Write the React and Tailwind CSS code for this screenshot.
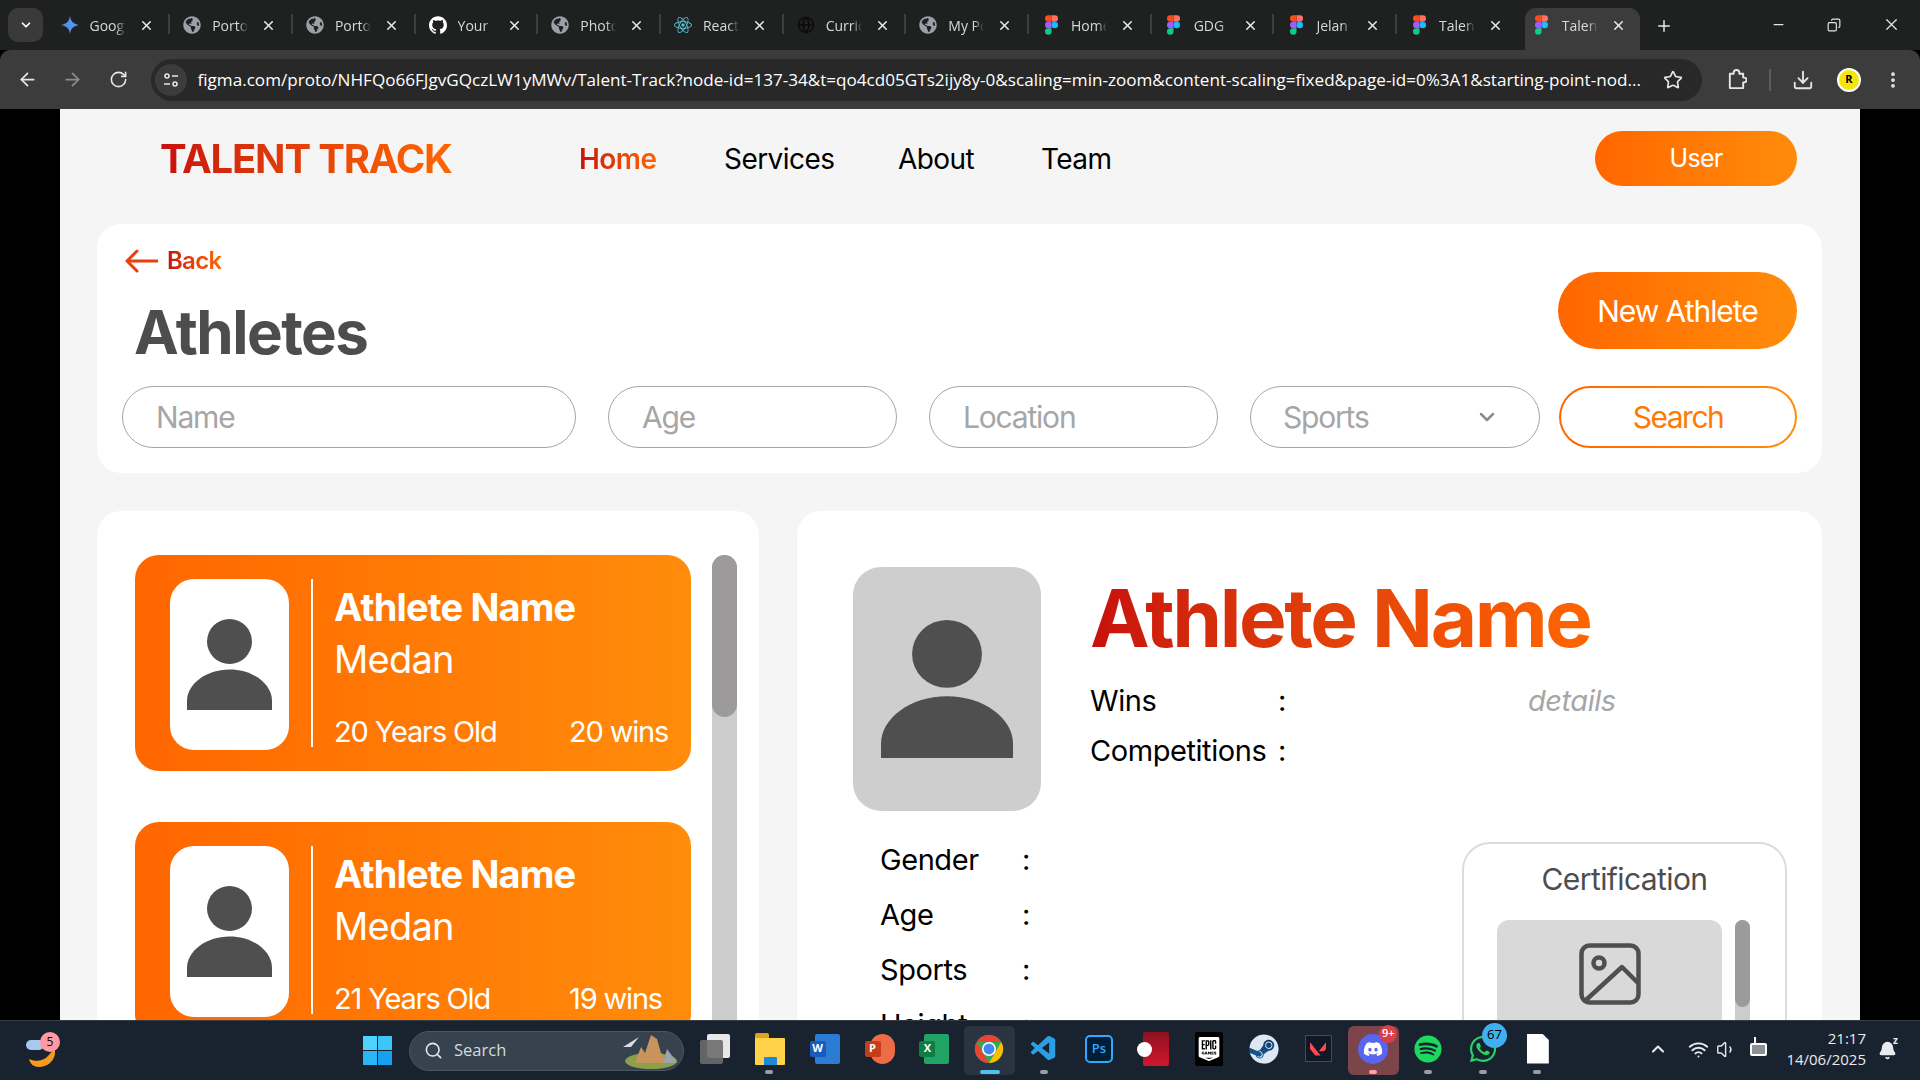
import React from "react";
import { ArrowLeft, ChevronDown, Download, EllipsisVertical, Globe, Minus, Plus, RotateCw, ArrowRight, Search, Star, X, Copy, ChevronUp, Wifi, Volume1, Bell } from "lucide-react";
import { FaDiscord, FaGlobeAmericas, FaSpotify, FaSteam, FaWhatsapp } from "react-icons/fa";
import { SiEpicgames, SiGithub, SiReact, SiValorant } from "react-icons/si";
import { VscVscode } from "react-icons/vsc";

const FigmaLogo = () => (
    <svg viewBox="0 0 38 57" className="w-[13px] h-[20px]">
        <path fill="#1ABCFE" d="M19 28.5a9.5 9.5 0 1 1 19 0 9.5 9.5 0 0 1-19 0z" />
        <path fill="#0ACF83" d="M0 47.5A9.5 9.5 0 0 1 9.5 38H19v9.5a9.5 9.5 0 1 1-19 0z" />
        <path fill="#FF7262" d="M19 0v19h9.5a9.5 9.5 0 1 0 0-19H19z" />
        <path fill="#F24E1E" d="M0 9.5A9.5 9.5 0 0 0 9.5 19H19V0H9.5A9.5 9.5 0 0 0 0 9.5z" />
        <path fill="#A259FF" d="M0 28.5A9.5 9.5 0 0 0 9.5 38H19V19H9.5A9.5 9.5 0 0 0 0 28.5z" />
    </svg>
);

const GeminiStar = () => (
    <svg viewBox="0 0 24 24" className="w-[18px] h-[18px]">
        <defs>
            <linearGradient id="gem" x1="0" y1="1" x2="1" y2="0">
                <stop offset="0" stopColor="#4f7fe8" />
                <stop offset="1" stopColor="#5aa5f5" />
            </linearGradient>
        </defs>
        <path fill="url(#gem)" d="M12 0c1 7 4 10.500 12 12-8 1.500-11 5-12 12-1-7-4-10.500-12-12 8-1.500 11-5 12-12z" />
    </svg>
);

const globeIcon = <FaGlobeAmericas className="w-[18px] h-[18px] text-[#9aa0a6]" />;

const tabs = [
    { title: "Goog", icon: <GeminiStar /> },
    { title: "Porto", icon: globeIcon },
    { title: "Porto", icon: globeIcon },
    { title: "Your", icon: <SiGithub className="w-[20px] h-[20px] text-white" /> },
    { title: "Photo", icon: globeIcon },
    { title: "React", icon: <SiReact className="w-[18px] h-[18px] text-[#58c4dc]" /> },
    { title: "Curric", icon: <Globe className="w-[18px] h-[18px] text-[#0b0b0b]" /> },
    { title: "My Po", icon: globeIcon },
    { title: "Home", icon: <FigmaLogo /> },
    { title: "GDG", icon: <FigmaLogo /> },
    { title: "Jelan", icon: <FigmaLogo /> },
    { title: "Talen", icon: <FigmaLogo /> },
    { title: "Talen", icon: <FigmaLogo />, active: true },
];

function ChromeTabs() {
    return (
        <div className="h-[50px] bg-[#1f2121] flex items-start relative font-['Open_Sans',sans-serif]">
            <div className="mt-[8px] ml-[8px] w-[35px] h-[34px] rounded-[10px] bg-[#3a3a3a] flex items-center justify-center mr-[4.500px]">
                <ChevronDown className="w-[14px] h-[14px] text-white" strokeWidth={3} />
            </div>
            {tabs.map((tab, i) => (
                <div key={i} className="relative w-[122.7px] h-[34px] mt-[8px] flex items-center shrink-0">
                    {tab.active && (
                        <div className="absolute left-[5px] right-[2px] top-0 -bottom-[8px] bg-[#3c3c3c] rounded-t-[11px]" />
                    )}
                    <div className="relative w-[18px] ml-[13px] flex justify-center">{tab.icon}</div>
                    <span className="relative ml-[11px] w-[36px] overflow-hidden whitespace-nowrap text-[14px] text-[#d6d8da] [mask-image:linear-gradient(90deg,#000_72%,transparent)]">
                        {tab.title}
                    </span>
                    <X className="relative ml-[13px] w-[15px] h-[15px] text-[#e4e6e8]" strokeWidth={2.5} />
                    {!tab.active && i < 11 && (
                        <div className="absolute right-0 top-[6px] h-[20px] w-[2px] bg-[#3d3f41]" />
                    )}
                </div>
            ))}
            <Plus className="ml-[13px] mt-[17px] w-[18px] h-[18px] text-[#e4e6e8]" strokeWidth={2} />
            <Minus className="absolute left-[1771px] top-[17px] w-[15px] h-[15px] text-[#e4e6e8]" />
            <Copy className="absolute left-[1827px] top-[18px] w-[14px] h-[14px] text-[#e4e6e8] -scale-x-100" />
            <X className="absolute left-[1882px] top-[15px] w-[19px] h-[19px] text-[#e4e6e8]" strokeWidth={1.5} />
        </div>
    );
}

function ChromeToolbar() {
    return (
        <div className="h-[59px] bg-[#3c3c3c] rounded-tl-[10px] rounded-tr-[10px] flex items-center font-['Open_Sans',sans-serif] text-[#e4e6e8]">
            <ArrowLeft className="ml-[17px] w-[21px] h-[21px] shrink-0" strokeWidth={2} />
            <ArrowRight className="ml-[24px] w-[21px] h-[21px] shrink-0 text-[#8b8d8f]" strokeWidth={2} />
            <RotateCw className="ml-[26px] w-[19px] h-[19px] shrink-0" strokeWidth={2} />
            <div className="ml-[22.500px] w-[1551px] h-[42px] rounded-full bg-[#282828] flex items-center shrink-0">
                <div className="ml-[4px] w-[32px] h-[32px] rounded-full bg-[#3c3c3c] flex items-center justify-center">
                    <svg viewBox="0 0 16 16" className="w-[16px] h-[16px]" fill="none" stroke="#e4e6e8" strokeWidth="1.6">
                        <circle cx="4" cy="4" r="2" />
                        <path d="M9 4h6M1 12h6" />
                        <circle cx="12" cy="12" r="2" />
                    </svg>
                </div>
                <span className="ml-[11px] w-[1450px] whitespace-nowrap text-[17.1px] text-white">
                    figma.com/proto/NHFQo66FJgvGQczLW1yMWv/Talent-Track?node-id=137-34&amp;t=qo4cd05GTs2ijy8y-0&amp;scaling=min-zoom&amp;content-scaling=fixed&amp;page-id=0%3A1&amp;starting-point-nod...
                </span>
                <Star className="ml-auto mr-[19px] w-[20px] h-[20px] shrink-0" strokeWidth={2} />
            </div>
            <svg viewBox="0 0 22 22" className="ml-[24.500px] w-[21px] h-[21px] shrink-0" fill="none" stroke="currentColor" strokeWidth="2" strokeLinejoin="round">
                <path d="M4 5h4V4a3 3 0 0 1 6 0v1h4v4h1a2.500 2.500 0 0 1 0 5h-1v6H4z" />
            </svg>
            <div className="ml-[22px] w-[2px] h-[22px] bg-[#5a5c5e] shrink-0" />
            <Download className="ml-[21px] w-[22px] h-[22px] shrink-0" strokeWidth={2} />
            <div className="ml-[23px] w-[24px] h-[24px] rounded-full bg-[#f5e50a] border-2 border-white flex items-center justify-center text-[11px] font-bold text-black shrink-0">
                R
            </div>
            <EllipsisVertical className="ml-[22px] w-[20px] h-[20px] shrink-0" strokeWidth={2.5} />
        </div>
    );
}

const PersonIcon = ({ className }) => (
    <svg viewBox="0 0 85 91.5" preserveAspectRatio="none" className={className} fill="#4f4f50">
        <circle cx="42.5" cy="22.5" r="22.5" />
        <path d="M0 91.5V82C0 65 19 50.500 42.500 50.500S85 65 85 82V91.500Z" />
    </svg>
);

function AthleteCard({ age, wins }) {
    return (
        <div className="h-[216px] rounded-[24px] bg-linear-to-r from-[#ff6600] to-[#ff8c0b] flex pl-[35px] pt-[24px] shrink-0">
            <div className="w-[119px] h-[171px] rounded-[24px] bg-white flex items-center justify-center">
                <PersonIcon className="w-[85px] h-[91.5px]" />
            </div>
            <div className="ml-[22px] w-[2px] h-[168px] bg-white" />
            <div className="ml-[21px] flex flex-col text-white">
                <div className="text-[38px] leading-[50px] font-bold tracking-[-0.022em] mt-[3px]">Athlete Name</div>
                <div className="text-[38px] leading-[50px] mt-[2px] tracking-[-0.02em]">Medan</div>
                <div className="flex mt-[28px] text-[29px] leading-[40px] tracking-[-0.04em]">
                    <span className="w-[235px]">{age} Years Old</span>
                    <span>{wins} wins</span>
                </div>
            </div>
        </div>
    );
}

const Scrollbar = ({ className, thumb }) => (
    <div className={`bg-[#cccccc] rounded-t-full shrink-0 ${className}`}>
        <div className={`bg-[#9c9a9a] rounded-full ${thumb}`} />
    </div>
);

const filters = [
    { label: "Name", width: "w-[454px]" },
    { label: "Age", width: "w-[289px]" },
    { label: "Location", width: "w-[289px]" },
];

const stats = ["Gender", "Age", "Sports", "Height"];

function TalentPage() {
    return (
        <div className="flex-1 min-h-0 bg-black px-[60px]">
            <div className="h-full bg-[#f5f5f5] overflow-hidden font-['Inter',sans-serif]">
                <nav className="flex items-center pt-[22px] pb-[38px] pl-[100px] pr-[63px]">
                    <span className="w-[419px] text-[40px] leading-[55px] font-bold tracking-[-0.03em]">
                        <span className="bg-linear-to-r from-[#c80d0d] to-[#ff6600] bg-clip-text text-transparent">TALENT TRACK</span>
                    </span>
                    <a className="w-[81px] mr-[64px] text-[28px] font-semibold tracking-[-0.02em] bg-linear-to-r from-[#c80d0d] to-[#ff6600] bg-clip-text text-transparent">Home</a>
                    <a className="w-[110px] mr-[64px] text-[28px] text-black tracking-[-0.02em] whitespace-nowrap">Services</a>
                    <a className="w-[80px] mr-[63px] text-[28px] text-black tracking-[-0.02em]">About</a>
                    <a className="text-[28px] text-black tracking-[-0.02em]">Team</a>
                    <button className="ml-auto w-[202px] h-[55px] rounded-full bg-linear-to-r from-[#ff6600] to-[#ff8c0b] text-white text-[25px] tracking-[-0.03em]">
                        User
                    </button>
                </nav>

                <div className="pl-[37px] pr-[38px] w-full">
                    <section className="h-[249px] bg-white rounded-[24px] pl-[25px] pr-[25px] pt-[25px]">
                        <div className="flex justify-between h-[137px]">
                            <div>
                                <div className="flex items-center gap-[9px] h-[24px] ml-[3px]">
                                    <svg viewBox="0 0 33 24" className="w-[33px] h-[24px]" fill="none" stroke="#e8400a" strokeWidth="3" strokeLinecap="round" strokeLinejoin="round">
                                        <path d="M32 12H2M12 2 2 12l10 10" />
                                    </svg>
                                    <span className="text-[24px] font-semibold tracking-[-0.03em] bg-linear-to-r from-[#c80d0d] to-[#ff6600] bg-clip-text text-transparent">Back</span>
                                </div>
                                <h1 className="ml-[12px] mt-[23px] text-[60px] leading-[72px] font-bold text-[#4d4d4f] tracking-[-0.025em]">Athletes</h1>
                            </div>
                            <button className="mt-[23px] w-[239px] h-[77px] rounded-full bg-linear-to-r from-[#ff6600] to-[#ff8c0b] text-white text-[30px] tracking-[-0.035em] pt-[2px]">
                                New Athlete
                            </button>
                        </div>
                        <div className="flex h-[62px]">
                            {filters.map((f) => (
                                <div key={f.label} className={`${f.width} mr-[32px] rounded-full border-[1.5px] border-[#a6a6a6] flex items-center pl-[33px] text-[30px] text-[#a6a6a6] tracking-[-0.04em]`}>
                                    {f.label}
                                </div>
                            ))}
                            <div className="w-[290px] rounded-full border-[1.5px] border-[#a6a6a6] flex items-center pl-[32px] text-[30px] text-[#a6a6a6] tracking-[-0.04em]">
                                Sports
                                <ChevronDown className="ml-auto mr-[40px] w-[24px] h-[24px] text-[#8c8c8c]" strokeWidth={2.5} />
                            </div>
                            <div className="ml-[19px] w-[238px] rounded-full p-[2px] bg-linear-to-r from-[#ff6600] to-[#ff8c0b]">
                                <div className="w-full h-full rounded-full bg-white flex items-center justify-center text-[30px] tracking-[-0.05em] text-[#ff7a05]">
                                    Search
                                </div>
                            </div>
                        </div>
                    </section>

                    <div className="flex gap-[38px] mt-[38px]">
                        <aside className="w-[662px] h-[600px] bg-white rounded-[24px] pl-[38px] pt-[44px] flex gap-[21px] shrink-0">
                            <div className="w-[556px] flex flex-col gap-[51px]">
                                <AthleteCard age={20} wins={20} />
                                <AthleteCard age={21} wins={19} />
                            </div>
                            <Scrollbar className="w-[25px] h-[556px]" thumb="h-[162px]" />
                        </aside>

                        <section className="flex-1 h-[600px] bg-white rounded-[24px] pl-[56px] pt-[56px]">
                            <div className="flex h-[244px]">
                                <div className="w-[188px] h-[244px] rounded-[28px] bg-[#cecece] flex items-center justify-center">
                                    <PersonIcon className="w-[132px] h-[138px]" />
                                </div>
                                <div className="ml-[49px]">
                                    <h2 className="mt-[6px] text-[80px] leading-[90px] font-bold tracking-[-0.03em] bg-linear-to-r from-[#c80d0d] to-[#ff6600] bg-clip-text text-transparent w-[505px] whitespace-nowrap">
                                        Athlete Name
                                    </h2>
                                    <div className="mt-[13px] flex items-center text-[29px] leading-[50px] text-black tracking-[-0.015em]">
                                        <span className="w-[188px]">Wins</span>
                                        <span>:</span>
                                        <span className="ml-[242px] italic text-[#a6a6a6]">details</span>
                                    </div>
                                    <div className="flex items-center text-[29px] leading-[50px] text-black tracking-[-0.015em]">
                                        <span className="w-[188px] whitespace-nowrap">Competitions</span>
                                        <span>:</span>
                                    </div>
                                </div>
                            </div>
                            <div className="flex mt-[31px]">
                                <div className="ml-[27px] -mt-[10px]">
                                    {stats.map((s) => (
                                        <div key={s} className="h-[55px] flex items-center text-[29px] text-black tracking-[-0.015em]">
                                            <span className="w-[142px]">{s}</span>
                                            <span>:</span>
                                        </div>
                                    ))}
                                </div>
                                <div className="ml-auto mr-[35px] w-[325px] h-[300px] rounded-[28px] border-2 border-[#dcdcdc] pl-[33px]">
                                    <div className="pr-[33px] text-center text-[30px] leading-[36px] mt-[17px] text-[#4d4d4f] tracking-[-0.02em]">Certification</div>
                                    <div className="flex mt-[23px] gap-[13px]">
                                        <div className="w-[225px] h-[200px] rounded-[12px] bg-[#d9d9d9] flex justify-center pt-[23px]">
                                            <svg viewBox="0 0 62 62" className="w-[62px] h-[62px]" fill="none" stroke="#4f4f50" strokeWidth="4.500" strokeLinejoin="round">
                                                <rect x="2.500" y="2.500" width="57" height="57" rx="8" />
                                                <circle cx="20" cy="20" r="5.500" />
                                                <path d="M7 57 43 24l17 17" />
                                            </svg>
                                        </div>
                                        <Scrollbar className="w-[15px] h-[200px]" thumb="h-[87px]" />
                                    </div>
                                </div>
                            </div>
                        </section>
                    </div>
                </div>
            </div>
        </div>
    );
}

const Badge = ({ bg, color = "text-black", className, children }) => (
    <span className={`absolute flex items-center justify-center rounded-full ${bg} ${color} ${className}`}>{children}</span>
);

const OfficeTile = ({ back, front, letter }) => (
    <div className="relative w-[30px] h-[30px]">
        <div className={`absolute left-[5px] top-0 w-[25px] h-[30px] rounded-[2px] ${back}`} />
        <div className={`absolute left-0 top-[7px] w-[16px] h-[16px] rounded-[2px] ${front} flex items-center justify-center text-white text-[11px] font-bold`}>{letter}</div>
    </div>
);

const ChromeLogo = () => (
    <svg viewBox="0 0 32 32" className="w-[30px] h-[30px]">
        <circle cx="16" cy="16" r="15" fill="#34a853" />
        <path d="M16 1a15 15 0 0 1 13 7.500H16L3 8.500A15 15 0 0 1 16 1z" fill="#ea4335" />
        <path d="M3 8.500 9.500 20 16 31A15 15 0 0 1 3 8.500z" fill="#ea4335" />
        <path d="M29 8.500A15 15 0 0 1 16 31l6.500-11L29 8.500z" fill="#fbbc04" />
        <circle cx="16" cy="16" r="7.500" fill="#fff" />
        <circle cx="16" cy="16" r="5.800" fill="#4285f4" />
    </svg>
);

const taskIcons = [
    {
        icon: (
            <div className="relative w-[30px] h-[30px]">
                <div className="absolute right-0 top-0 w-[23px] h-[24px] rounded-[2px] bg-[#e8e8e8]" />
                <div className="absolute left-0 bottom-0 w-[23px] h-[24px] rounded-[2px] bg-[#6b6b6b]/90" />
            </div>
        ),
    },
    {
        dot: true,
        icon: (
            <div className="relative w-[30px] h-[32px]">
                <div className="absolute left-0 top-0 w-[14px] h-[8px] rounded-t-[2px] bg-[#d9a520]" />
                <div className="absolute inset-x-0 top-[5px] bottom-0 bg-[#ffd24a] rounded-[1px]" />
                <div className="absolute left-[9px] bottom-0 w-[13px] h-[8px] bg-[#1c8ad6] rounded-t-[1px]" />
            </div>
        ),
    },
    { icon: <OfficeTile back="bg-[#2b7cd3]" front="bg-[#185abd]" letter="W" /> },
    { icon: <OfficeTile back="bg-[#ed6c47] rounded-full" front="bg-[#c43e1c]" letter="P" /> },
    { icon: <OfficeTile back="bg-[#21a366]" front="bg-[#107c41]" letter="X" /> },
    { active: "chrome", icon: <ChromeLogo /> },
    { dot: true, icon: <VscVscode className="w-[30px] h-[30px] text-[#2a9fe6]" /> },
    {
        icon: (
            <div className="w-[28px] h-[28px] rounded-[5px] bg-[#001e36] border-2 border-[#31a8ff] flex items-center justify-center text-[#31a8ff] text-[13px] font-semibold">
                Ps
            </div>
        ),
    },
    {
        icon: (
            <div className="relative w-[26px] h-[34px] rounded-[2px] bg-linear-to-b from-[#8e1020] to-[#d0172c] ml-[4px]">
                <div className="absolute -left-[6px] top-[10px] w-[15px] h-[15px] rounded-full bg-white" />
            </div>
        ),
    },
    { icon: <SiEpicgames className="w-[28px] h-[34px] text-white bg-black rounded-[2px] p-[2px]" /> },
    { icon: <FaSteam className="w-[30px] h-[30px] text-[#dfe8f2] bg-linear-to-b from-[#0f2a56] to-[#1a6aa8] rounded-full" /> },
    {
        icon: (
            <div className="w-[27px] h-[27px] bg-[#111823] border border-[#9b2335] flex items-center justify-center">
                <SiValorant className="w-[16px] h-[16px] text-[#ff4655]" />
            </div>
        ),
    },
    {
        active: "discord",
        dot: true,
        icon: (
            <div className="relative">
                <div className="w-[30px] h-[30px] rounded-full bg-[#5865f2] flex items-center justify-center">
                    <FaDiscord className="w-[20px] h-[20px] text-white" />
                </div>
                <Badge bg="bg-[#d8404a]" color="text-white" className="-right-[9px] -top-[9px] w-[18px] h-[18px] text-[11px] font-semibold">9+</Badge>
            </div>
        ),
    },
    { dot: true, icon: <FaSpotify className="w-[28px] h-[28px] text-[#1ed760]" /> },
    {
        dot: true,
        icon: (
            <div className="relative">
                <FaWhatsapp className="w-[30px] h-[30px] text-[#25d366]" />
                <Badge bg="bg-[#40b0f0]" className="-right-[9px] -top-[11px] w-[25px] h-[25px] text-[13px]">67</Badge>
            </div>
        ),
    },
    {
        dot: true,
        icon: <div className="w-[22px] h-[30px] bg-white [clip-path:polygon(0_0,70%_0,100%_22%,100%_100%,0_100%)]" />,
    },
];

function TaskIcon({ icon, dot, active }) {
    return (
        <div className="relative w-[54.87px] h-full flex items-center justify-center shrink-0">
            {active === "chrome" && <div className="absolute left-[2px] right-[2px] top-[5px] bottom-[5px] rounded-[5px] bg-[#2a3340]" />}
            {active === "discord" && <div className="absolute left-[2px] right-[2px] top-[5px] bottom-[5px] rounded-[6px] bg-[#7c454b]" />}
            <div className="relative -mt-[4px]">{icon}</div>
            {active === "chrome" && <div className="absolute left-[18px] bottom-[6px] w-[20px] h-[4px] rounded-full bg-[#52bdf0]" />}
            {dot && <div className={`absolute left-[23px] bottom-[6px] w-[8px] h-[4px] rounded-full ${active === "discord" ? "bg-[#ff9fa8]" : "bg-[#9a9ea4]"}`} />}
        </div>
    );
}

function Taskbar() {
    return (
        <div className="h-[60px] bg-[#19222f] border-t border-[#3a3d42] flex items-center text-[#e8eaee] font-['Open_Sans',sans-serif] relative">
            <div className="w-[349.5px] h-full flex items-center pl-[26px] shrink-0">
                <div className="relative w-[34px] h-[36px]">
                    <div className="absolute left-0 top-[7px] w-[18px] h-[10px] rounded-full bg-[#a8c8ec]" />
                    <svg viewBox="0 0 26 20" className="absolute left-[3px] top-[14px] w-[26px] h-[20px]">
                        <path fill="#f59a1f" d="M26 0C28 12 20 20 10 20 5 20 1 17 0 12 6 15 14 14 18 10 21 7 23 4 26 0Z" />
                    </svg>
                    <Badge bg="bg-[#ff9aa5]" className="left-[14px] -top-[1px] w-[20px] h-[20px] text-[12px]">5</Badge>
                </div>
            </div>
            <div className="w-[55px] flex justify-center shrink-0">
                <div className="grid grid-cols-2 gap-[1px] w-[29px] h-[29px] -mt-[1px]">
                    <div className="bg-[#4fd2fb]" />
                    <div className="bg-[#3cc5f8]" />
                    <div className="bg-[#2ab5f5]" />
                    <div className="bg-[#179ff0]" />
                </div>
            </div>
            <div className="ml-[4.500px] w-[275px] h-[40px] rounded-full bg-[#36434f] border border-[#4a5661] flex items-center relative shrink-0">
                <Search className="ml-[14px] w-[19px] h-[19px]" strokeWidth={2} />
                <span className="ml-[11px] text-[16.500px] text-[#d7dade]">Search</span>
                <svg viewBox="0 0 60 36" className="absolute right-[3px] top-[1px] w-[62px] h-[36px]">
                    <ellipse cx="32" cy="28" rx="26" ry="8" fill="#8aa04a" />
                    <path d="M16 30 22 14l4 6 6-18 6 4 4 14 6 10z" fill="#c9935c" />
                    <path d="M44 30l4-14 6 8 4 6z" fill="#9da4b0" />
                    <path d="M4 14 20 4 12 14z" fill="#d9dde4" />
                </svg>
            </div>
            <div className="ml-[3.500px] flex h-full">
                {taskIcons.map((t, i) => (
                    <TaskIcon key={i} {...t} />
                ))}
            </div>
            <ChevronUp className="absolute left-[1648px] top-[18px] w-[20px] h-[20px]" strokeWidth={2.5} />
            <Wifi className="absolute left-[1688px] top-[18px] w-[21px] h-[21px]" strokeWidth={2.2} />
            <Volume1 className="absolute left-[1716px] top-[18px] w-[21px] h-[21px]" strokeWidth={1.6} />
            <div className="absolute left-[1750px] top-[22px] w-[17px] h-[13px] border-2 border-white rounded-[2px] bg-[#d8d8d8]/60" />
            <div className="absolute left-[1754px] top-[16px] w-[2px] h-[7px] bg-white" />
            <div className="absolute right-[54px] top-[7px] text-right text-[15px] leading-[21px] whitespace-nowrap">
                <div>21:17</div>
                <div>14/06/2025</div>
            </div>
            <Bell className="absolute left-[1878px] top-[20px] w-[19px] h-[19px]" fill="#e8eaee" strokeWidth={2} />
            <span className="absolute left-[1893px] top-[12px] text-[10px] font-bold">z</span>
        </div>
    );
}

export default function App() {
    return (
        <div className="w-[1920px] h-[1080px] flex flex-col overflow-hidden bg-black">
            <ChromeTabs />
            <ChromeToolbar />
            <TalentPage />
            <Taskbar />
        </div>
    );
}
